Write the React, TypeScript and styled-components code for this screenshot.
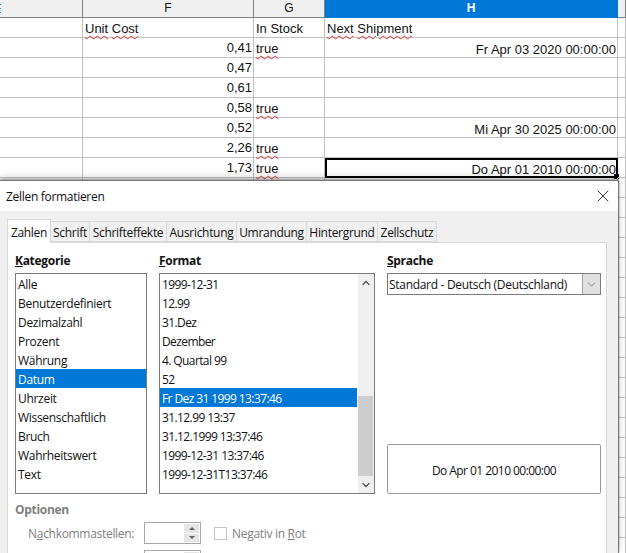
import React from "react";
import styled, { createGlobalStyle } from "styled-components";
import { ChevronDown, ChevronUp, X } from "lucide-react";

const Global = createGlobalStyle`
  html, body { margin: 0; padding: 0; background: #fff; }
  #root { width: 626px; height: 553px; overflow: hidden; position: relative; }
`;

const uiFont = `"Open Sans", "Noto Sans", sans-serif`;

const Sheet = styled.div`
  display: grid;
  grid-template-columns: 83px 171px 71px 293px 1fr;
  grid-template-rows: 18px;
  grid-auto-rows: 20px;
  font-family: "Liberation Sans", sans-serif;
  font-size: 13px;
  color: #111;
`;

const ColHead = styled.div<{ $active?: boolean }>`
  height: 18px;
  box-sizing: border-box;
  display: flex;
  align-items: center;
  justify-content: center;
  line-height: 17px;
  font-size: 12px;
  background: ${(p) => (p.$active ? "#0078d7" : "#f0f0f0")};
  color: ${(p) => (p.$active ? "#fff" : "#111")};
  font-weight: ${(p) => (p.$active ? 700 : 400)};
  border-right: 1px solid ${(p) => (p.$active ? "#0078d7" : "#808080")};
  border-bottom: 1px solid ${(p) => (p.$active ? "#0078d7" : "#808080")};
`;

/* what is left of the previous column's letter at the window edge */
const EdgeSliver = styled.span`
  width: 1px;
  height: 9px;
  margin-right: auto;
  background: repeating-linear-gradient(#2b9be8 0 1px, transparent 1px 4px);
`;

const Cell = styled.div<{ $right?: boolean; $selected?: boolean; $nudge?: number }>`
  position: relative;
  box-sizing: border-box;
  height: 20px;
  padding: 0 1px 0 2px;
  line-height: ${(p) => 22 + (p.$nudge ?? 0) * 2}px;
  white-space: nowrap;
  text-align: ${(p) => (p.$right ? "right" : "left")};
  border-right: 1px solid #c0c0c0;
  border-bottom: 1px solid #c0c0c0;
  ${(p) => p.$selected && "outline: 2px solid #000; outline-offset: -2px;"}
`;

const Wavy = styled.span`
  text-decoration: underline wavy #e03030 1px;
  text-underline-offset: 2px;
`;

const Handle = styled.span`
  position: absolute;
  right: -2px;
  bottom: -2px;
  width: 5px;
  height: 5px;
  background: #000;
`;

const Dialog = styled.div`
  position: absolute;
  left: 0;
  top: 180px;
  width: 619px;
  height: 373px;
  background: #f0f0f0;
  border-right: 1px solid #777;
  box-sizing: border-box;
  box-shadow: 0 -1px 2px rgba(0, 0, 0, 0.35), 0 -3px 8px rgba(0, 0, 0, 0.16);
  font-family: ${uiFont};
  font-size: 12px;
  letter-spacing: -0.3px;
  color: #111;
  display: flex;
  flex-direction: column;
`;

const TitleBar = styled.div`
  height: 31px;
  flex: none;
  background: #fff;
  display: flex;
  align-items: center;
  justify-content: space-between;
  padding: 0 5px 0 6px;
  font-size: 12px;
  border-top: 1px solid #777;
  box-sizing: border-box;
`;

const Tabs = styled.div`
  display: flex;
  align-items: flex-end;
  height: 31px;
  flex: none;
  padding-left: 7px;
  box-sizing: border-box;
  position: relative;
  z-index: 1;
`;

const Tab = styled.div<{ $active?: boolean; $w: number }>`
  width: ${(p) => p.$w}px;
  height: ${(p) => (p.$active ? 24 : 21)}px;
  box-sizing: border-box;
  text-align: center;
  line-height: ${(p) => (p.$active ? 25 : 22)}px;
  white-space: nowrap;
  background: ${(p) => (p.$active ? "#fff" : "#f0f0f0")};
  border: 1px solid #d9d9d9;
  border-bottom: ${(p) => (p.$active ? "none" : "1px solid #d9d9d9")};
  margin-right: -1px;
  margin-bottom: ${(p) => (p.$active ? -1 : 0)}px;
`;

const Panel = styled.div`
  flex: 1;
  margin-left: 7px;
  width: 600px;
  background: #fff;
  border-left: 1px solid #d9d9d9;
  border-right: 1px solid #d9d9d9;
  border-top: 1px solid #d9d9d9;
  box-sizing: border-box;
  padding: 9px 0 0 7px;
`;

const Columns = styled.div`
  display: grid;
  grid-template-columns: 132px 216px 214px;
  column-gap: 12px;
`;

const FieldLabel = styled.div`
  height: 21px;
  font-weight: 700;
  line-height: 17px;
  u { text-underline-offset: 1px; }
`;

const ListBox = styled.div`
  box-sizing: border-box;
  height: 221px;
  border: 1px solid #7a7a7a;
  display: flex;
  background: #fff;
`;

const Items = styled.div<{ $format?: boolean }>`
  flex: 1;
  min-width: 0;
  margin-right: ${(p) => (p.$format ? 1 : 0)}px;
  letter-spacing: ${(p) => (p.$format ? -0.6 : -0.3)}px;
`;

const Item = styled.div<{ $selected?: boolean }>`
  height: 19px;
  line-height: 22px;
  padding-left: 2px;
  white-space: nowrap;
  background: ${(p) => (p.$selected ? "#0078d7" : "transparent")};
  color: ${(p) => (p.$selected ? "#fff" : "#111")};
`;

const ScrollBar = styled.div`
  width: 16px;
  flex: none;
  background: #f0f0f0;
  display: flex;
  flex-direction: column;
  align-items: center;
  justify-content: space-between;
  position: relative;
`;

const Thumb = styled.div`
  position: absolute;
  left: 0;
  right: 1px;
  top: 122px;
  height: 80px;
  background: #cdcdcd;
`;

const ArrowBox = styled.div`
  height: 17px;
  display: flex;
  align-items: center;
  justify-content: center;
  color: #505050;
`;

const RightCol = styled.div`
  display: flex;
  flex-direction: column;
`;

const Select = styled.div`
  box-sizing: border-box;
  height: 22px;
  border: 1px solid #7a7a7a;
  display: flex;
  align-items: center;
  padding-left: 1px;
  white-space: nowrap;
`;

const SelectText = styled.span`
  flex: 1;
`;

const SelectButton = styled.span`
  width: 17px;
  height: 20px;
  background: #e1e1e1;
  border-left: 1px solid #a0a0a0;
  display: flex;
  align-items: center;
  justify-content: center;
  color: #555;
`;

const Preview = styled.div`
  box-sizing: border-box;
  height: 50px;
  margin-top: auto;
  border: 1px solid #999;
  border-radius: 2px;
  text-align: center;
  line-height: 51px;
  letter-spacing: -0.55px;
`;

const Options = styled.div`
  margin-top: 7px;
  color: #808080;
`;

const OptionsTitle = styled.div`
  font-weight: 700;
  height: 21px;
  line-height: 17px;
`;

const OptionRow = styled.div`
  display: flex;
  align-items: center;
  height: 22px;
  padding-left: 13px;
  margin-bottom: 6px;
`;

const OptionLabel = styled.span`
  width: 116px;
`;

const Spin = styled.div`
  box-sizing: border-box;
  width: 57px;
  height: 22px;
  border: 1px solid #a8a8a8;
  display: flex;
  justify-content: flex-end;
  padding: 1px;
`;

const SpinButtons = styled.div`
  width: 15px;
  display: flex;
  flex-direction: column;
  gap: 1px;
`;

const SpinButton = styled.div`
  flex: 1;
  background: #e6e6e6;
  display: flex;
  align-items: center;
  justify-content: center;
`;

const Triangle = styled.span<{ $down?: boolean }>`
  width: 0;
  height: 0;
  border-left: 3px solid transparent;
  border-right: 3px solid transparent;
  ${(p) => (p.$down ? "border-top" : "border-bottom")}: 3px solid #606060;
`;

const CheckBox = styled.span`
  box-sizing: border-box;
  width: 13px;
  height: 13px;
  margin: 0 5px 0 13px;
  border: 1px solid #c4c4c4;
`;

const header = ["F", "G", "H", "I"];
const rows: [string, boolean, string][] = [
  ["0,41", true, "Fr Apr 03 2020 00:00:00"],
  ["0,47", false, ""],
  ["0,61", false, ""],
  ["0,58", true, ""],
  ["0,52", false, "Mi Apr 30 2025 00:00:00"],
  ["2,26", true, ""],
  ["1,73", true, "Do Apr 01 2010 00:00:00"],
];
const blankRows = Array.from({ length: 19 }, (_, i) => i);
const tabs: [string, number][] = [
  ["Zahlen", 44],
  ["Schrift", 40],
  ["Schrifteffekte", 78],
  ["Ausrichtung", 71],
  ["Umrandung", 71],
  ["Hintergrund", 72],
  ["Zellschutz", 60],
];
const categories = ["Alle", "Benutzerdefiniert", "Dezimalzahl", "Prozent", "Währung", "Datum", "Uhrzeit", "Wissenschaftlich", "Bruch", "Wahrheitswert", "Text"];
const formats = ["1999-12-31", "12.99", "31.Dez", "Dezember", "4. Quartal 99", "52", "Fr Dez 31 1999 13:37:46", "31.12.99 13:37", "31.12.1999 13:37:46", "1999-12-31 13:37:46", "1999-12-31T13:37:46"];

export default function App() {
  return (
    <>
      <Global />
      <Sheet>
        <ColHead><EdgeSliver /></ColHead>
        {header.map((h) => (
          <ColHead key={h} $active={h === "H"}>{h === "I" ? "" : h}</ColHead>
        ))}
        <Cell />
        <Cell><Wavy>Unit</Wavy> <Wavy>Cost</Wavy></Cell>
        <Cell>In Stock</Cell>
        <Cell><Wavy>Next</Wavy> <Wavy>Shipment</Wavy></Cell>
        <Cell />
        {rows.map(([cost, stock, date], i) => (
          <React.Fragment key={cost}>
            <Cell />
            <Cell $right $nudge={-1}>{cost}</Cell>
            <Cell>{stock && <Wavy>true</Wavy>}</Cell>
            <Cell $right $nudge={1} $selected={i === 6}>
              {date}
              {i === 6 && <Handle />}
            </Cell>
            <Cell />
          </React.Fragment>
        ))}
        {blankRows.map((r) => (
          <React.Fragment key={r}>
            <Cell />
            <Cell />
            <Cell />
            <Cell />
            <Cell />
          </React.Fragment>
        ))}
      </Sheet>
      <Dialog>
        <TitleBar>
          <span>Zellen formatieren</span>
          <X size={20} strokeWidth={1} color="#111" />
        </TitleBar>
        <Tabs>
          {tabs.map(([t, w], i) => (
            <Tab key={t} $w={w} $active={i === 0}>{t}</Tab>
          ))}
        </Tabs>
        <Panel>
          <Columns>
            <div>
              <FieldLabel><u>K</u>ategorie</FieldLabel>
              <ListBox>
                <Items>
                  {categories.map((c) => (
                    <Item key={c} $selected={c === "Datum"}>{c}</Item>
                  ))}
                </Items>
              </ListBox>
            </div>
            <div>
              <FieldLabel><u>F</u>ormat</FieldLabel>
              <ListBox>
                <Items $format>
                  {formats.map((f, i) => (
                    <Item key={f} $selected={i === 6}>{f}</Item>
                  ))}
                </Items>
                <ScrollBar>
                  <ArrowBox><ChevronUp size={12} strokeWidth={2.5} /></ArrowBox>
                  <Thumb />
                  <ArrowBox><ChevronDown size={12} strokeWidth={2.5} /></ArrowBox>
                </ScrollBar>
              </ListBox>
            </div>
            <RightCol>
              <FieldLabel><u>S</u>prache</FieldLabel>
              <Select>
                <SelectText>Standard - Deutsch (Deutschland)</SelectText>
                <SelectButton><ChevronDown size={13} strokeWidth={1.25} /></SelectButton>
              </Select>
              <Preview>Do Apr 01 2010 00:00:00</Preview>
            </RightCol>
          </Columns>
          <Options>
            <OptionsTitle>Optionen</OptionsTitle>
            <OptionRow>
              <OptionLabel>N<u>a</u>chkommastellen:</OptionLabel>
              <Spin>
                <SpinButtons>
                  <SpinButton><Triangle /></SpinButton>
                  <SpinButton><Triangle $down /></SpinButton>
                </SpinButtons>
              </Spin>
              <CheckBox />
              <span>Negativ in <u>R</u>ot</span>
            </OptionRow>
            <OptionRow>
              <OptionLabel />
              <Spin>
                <SpinButtons>
                  <SpinButton><Triangle /></SpinButton>
                </SpinButtons>
              </Spin>
              <CheckBox />
            </OptionRow>
          </Options>
        </Panel>
      </Dialog>
    </>
  );
}
